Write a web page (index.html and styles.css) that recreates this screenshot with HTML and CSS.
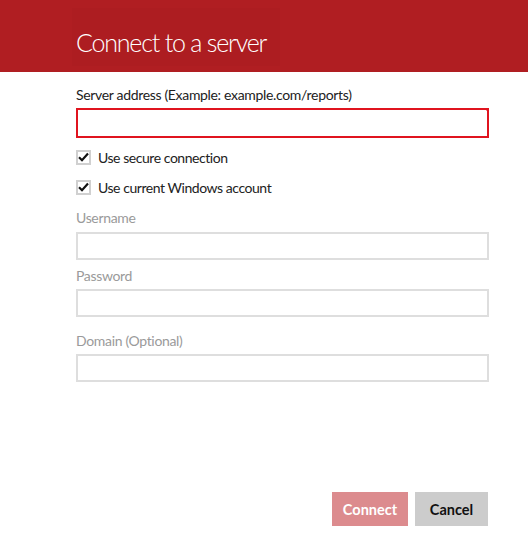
FILE: index.html
```html
<!DOCTYPE html>
<html lang="en">

<head>
    <meta charset="UTF-8">
    <title>Connect to a server</title>
    <link rel="stylesheet" href="styles.css">
</head>

<body>
    <div class="header">
        <div class="title">Connect to a server</div>
    </div>
    <div class="container">
        <label class="label first">Server address (Example: example.com/reports)</label>
        <div class="field invalid"></div>

        <div class="check top">
            <span class="box"><svg width="11" height="10" viewBox="0 0 11 10"><path d="M1 5.2 L4 8.2 L10 1.5" fill="none" stroke="#111" stroke-width="2.2"/></svg></span>
            Use secure connection
        </div>
        <div class="check">
            <span class="box"><svg width="11" height="10" viewBox="0 0 11 10"><path d="M1 5.2 L4 8.2 L10 1.5" fill="none" stroke="#111" stroke-width="2.2"/></svg></span>
            Use current Windows account
        </div>

        <label class="label muted user">Username</label>
        <div class="field"></div>

        <label class="label muted pass">Password</label>
        <div class="field"></div>

        <label class="label muted domain">Domain (Optional)</label>
        <div class="field"></div>

        <div class="buttons">
            <button class="connect-btn">Connect</button>
            <button class="cancel-btn">Cancel</button>
        </div>
    </div>
</body>

</html>
```

FILE: styles.css
```css
body {
    margin: 0;
    font-family: Lato, "Open Sans", sans-serif;
    background-color: #ffffff;
    color: #222;
}

.header {
    background-color: #b01e22;
    height: 72px;
    padding-left: 72px;
    padding-top: 8px;
    box-sizing: border-box;
}

.title {
    display: inline-block;
    background-color: #ad1d21;
    color: #fff;
    font-weight: 300;
    font-size: 25px;
    line-height: 68px;
    height: 58px;
    letter-spacing: -1.2px;
    padding: 0 14px 0 4px;
}

.container {
    padding: 0 39px 0 76px;
}

.label {
    display: block;
    font-size: 14px;
    line-height: 18px;
    letter-spacing: -0.33px;
}

.label.first {
    margin-top: 14px;
    margin-bottom: 4px;
}

.muted {
    color: #9a9a9a;
}

.label.user {
    margin-top: 7px;
    margin-bottom: 5px;
}

.label.pass {
    margin-top: 7px;
    margin-bottom: 4px;
}

.label.domain {
    margin-top: 15px;
    margin-bottom: 4px;
}

.field {
    height: 28px;
    border: 2px solid #dedede;
    box-sizing: border-box;
}

.field.invalid {
    position: relative;
    height: 30px;
    border-color: #e0141f;
}

.field.invalid::after {
    content: "";
    position: absolute;
    top: -2px;
    right: -2px;
    border-top: 5px solid #e0141f;
    border-left: 5px solid transparent;
}

.check {
    display: flex;
    align-items: center;
    height: 30px;
    font-size: 14px;
    letter-spacing: -0.45px;
}

.check.top {
    margin-top: 4px;
}

.box {
    width: 15px;
    height: 15px;
    border: 2px solid #d0d0d0;
    box-sizing: border-box;
    display: flex;
    align-items: center;
    justify-content: center;
    margin-right: 7px;
}

.buttons {
    display: flex;
    justify-content: flex-end;
    gap: 7px;
    margin-top: 110px;
    padding-right: 1px;
}

.buttons button {
    height: 34px;
    border: none;
    font-family: Lato, sans-serif;
    font-size: 14.5px;
    font-weight: bold;
    padding: 0;
}

.connect-btn {
    width: 76px;
    background-color: #dc8b8e;
    color: #fff;
}

.cancel-btn {
    width: 73px;
    background-color: #cccccc;
    color: #111;
}
```
